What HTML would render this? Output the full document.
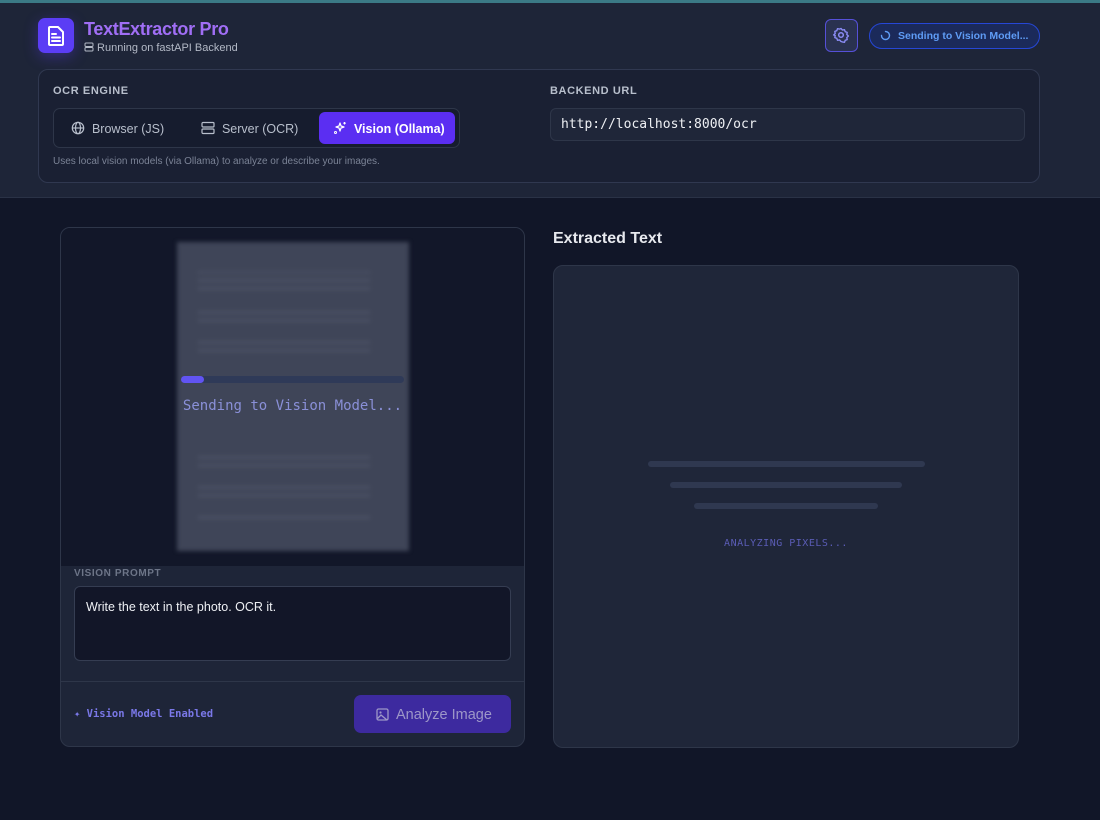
<!DOCTYPE html>
<html><head><meta charset="utf-8"><style>
*{box-sizing:border-box;margin:0;padding:0}
body{width:1100px;height:820px;background:#111628;font-family:"Liberation Sans",sans-serif;position:relative;overflow:hidden;color:#e5e7eb}
.abs{position:absolute}
.mono{font-family:"DejaVu Sans Mono","Liberation Mono",monospace}
</style></head><body>
<div class="abs" style="left:0;top:0;width:1100px;height:198px;background:#1e2538;border-bottom:1px solid #2a3246"></div>
<div class="abs" style="left:0;top:0;width:1100px;height:3px;background:#3b7a86"></div>
<div class="abs" style="left:38px;top:18px;width:36px;height:35px;border-radius:7px;background:#5b3df5;box-shadow:0 4px 14px rgba(91,61,245,.35)">
<svg width="36" height="35" viewBox="0 0 36 35"><path d="M12 9h8l5 5v12a1 1 0 0 1-1 1H12a1 1 0 0 1-1-1V10a1 1 0 0 1 1-1z" fill="none" stroke="#fff" stroke-width="2" stroke-linejoin="round"/><path d="M14 16h4M14 19.5h8M14 23h8" stroke="#fff" stroke-width="2" stroke-linecap="round"/></svg></div>
<div class="abs" style="left:84px;top:19px;font-size:18px;font-weight:bold;color:#a06ef5;letter-spacing:-0.3px">TextExtractor Pro</div>
<div class="abs" style="left:84px;top:42px;font-size:11px;color:#b3b9c6"><svg width="10" height="10" viewBox="0 0 10 10" style="vertical-align:-1px"><rect x="1" y="1" width="8" height="3.5" rx="1" fill="none" stroke="#b3b9c6"/><rect x="1" y="5.5" width="8" height="3.5" rx="1" fill="none" stroke="#b3b9c6"/></svg> Running on fastAPI Backend</div>
<div class="abs" style="left:825px;top:19px;width:33px;height:33px;border:1.5px solid #5650d8;border-radius:6px;background:#2a3250">
<svg width="30" height="30" viewBox="0 0 30 30"><circle cx="15" cy="15" r="2.3" fill="none" stroke="#8b8cf5" stroke-width="1.5"/><path d="M15 8.5l1.4 1.6 2.1-.4.7 2 2 .7-.4 2.1 1.6 1.5-1.6 1.5.4 2.1-2 .7-.7 2-2.1-.4L15 21.5l-1.4-1.6-2.1.4-.7-2-2-.7.4-2.1L7.6 15l1.6-1.5-.4-2.1 2-.7.7-2 2.1.4z" fill="none" stroke="#8b8cf5" stroke-width="1.4" stroke-linejoin="round"/></svg></div>
<div class="abs" style="left:869px;top:23px;width:171px;height:26px;border:1.5px solid #2647d6;border-radius:13px;background:#1b2a5a;font-size:10.5px;font-weight:bold;color:#5f9cf5;padding:6px 0 0 28px">Sending to Vision Model...</div>
<svg class="abs" style="left:880px;top:30px" width="11" height="11" viewBox="0 0 11 11"><path d="M5.5 1.5a4 4 0 1 1-4 4" fill="none" stroke="#5f9cf5" stroke-width="1.4" stroke-linecap="round"/></svg>
<div class="abs" style="left:38px;top:69px;width:1002px;height:114px;border:1px solid #303850;border-radius:10px;background:#1a2033"></div>
<div class="abs" style="left:53px;top:85px;font-size:11px;font-weight:bold;color:#b8bfcc;letter-spacing:.6px">OCR ENGINE</div>
<div class="abs" style="left:53px;top:108px;width:407px;height:40px;border:1px solid #2e3649;border-radius:7px;background:#161c2e"></div>
<div class="abs" style="left:71px;top:121px;font-size:12.5px;color:#b8bfcc"><svg width="14" height="14" viewBox="0 0 14 14" style="vertical-align:-2px"><circle cx="7" cy="7" r="5.7" fill="none" stroke="#b8bfcc" stroke-width="1.2"/><ellipse cx="7" cy="7" rx="2.5" ry="5.7" fill="none" stroke="#b8bfcc" stroke-width="1.2"/><path d="M1.3 7h11.4" stroke="#b8bfcc" stroke-width="1.2"/></svg>&nbsp; Browser (JS)</div>
<div class="abs" style="left:201px;top:121px;font-size:12.5px;color:#b8bfcc"><svg width="14" height="14" viewBox="0 0 14 14" style="vertical-align:-2px"><rect x="1" y="1.5" width="12" height="4.5" rx="1" fill="none" stroke="#b8bfcc" stroke-width="1.2"/><rect x="1" y="8" width="12" height="4.5" rx="1" fill="none" stroke="#b8bfcc" stroke-width="1.2"/></svg>&nbsp; Server (OCR)</div>
<div class="abs" style="left:319px;top:112px;width:136px;height:32px;border-radius:6px;background:#5b2ef2;font-size:12.5px;font-weight:bold;color:#fff;padding:9px 0 0 14px;white-space:nowrap"><svg width="14" height="14" viewBox="0 0 14 14" style="vertical-align:-2px"><path d="M7 2l1 3 3 1-3 1-1 3-1-3-3-1 3-1z" fill="none" stroke="#fff" stroke-width="1.2" stroke-linejoin="round"/><path d="M11.5 1v2.5M10.3 2.2h2.5" stroke="#fff" stroke-width="1.1"/><circle cx="2.5" cy="11.5" r="1" fill="none" stroke="#fff"/></svg>&nbsp; Vision (Ollama)</div>
<div class="abs" style="left:53px;top:156px;font-size:10px;color:#7b8396">Uses local vision models (via Ollama) to analyze or describe your images.</div>
<div class="abs" style="left:550px;top:85px;font-size:11px;font-weight:bold;color:#b8bfcc;letter-spacing:.6px">BACKEND URL</div>
<div class="abs mono" style="left:550px;top:108px;width:475px;height:33px;border:1px solid #2e3649;border-radius:6px;background:#1f2639;font-size:13px;color:#eef0f4;padding:8px 0 0 10px">http://localhost:8000/ocr</div>
<div class="abs" style="left:60px;top:227px;width:465px;height:520px;border:1px solid #2e3649;border-radius:10px;background:#1e2538;overflow:hidden">
 <div style="position:absolute;left:0;top:0;width:465px;height:338px;background:#121729"></div>
 <div style="position:absolute;left:116px;top:14px;width:232px;height:309px;background:#3f4558;filter:blur(2px)">
  <div style="position:absolute;left:22px;top:30px;width:170px;height:1px;box-shadow:0 0 0 1px #4b5164,0 8px 0 1px #4b5164,0 16px 0 1px #4b5164,0 40px 0 1px #4b5164,0 48px 0 1px #4b5164,0 70px 0 1px #4b5164,0 78px 0 1px #4b5164,0 185px 0 1px #4b5164,0 193px 0 1px #4b5164,0 215px 0 1px #4b5164,0 223px 0 1px #4b5164,0 245px 0 1px #4b5164"></div>
 </div>
 <div style="position:absolute;left:120px;top:148px;width:223px;height:7px;border-radius:4px;background:#2f3a58"></div>
 <div style="position:absolute;left:120px;top:148px;width:23px;height:7px;border-radius:4px;background:#6154f2"></div>
 <div class="mono" style="position:absolute;left:0;top:170px;width:463px;text-align:center;font-size:14px;color:#8a90d8">Sending to Vision Model...</div>
 <div style="position:absolute;left:13px;top:340px;font-size:10px;font-weight:bold;color:#6d7588;letter-spacing:.6px">VISION PROMPT</div>
 <div style="position:absolute;left:13px;top:358px;width:437px;height:75px;border:1px solid #353d52;border-radius:6px;background:#121628;font-size:12.5px;color:#eef0f4;padding:13px 0 0 11px">Write the text in the photo. OCR it.</div>
 <div style="position:absolute;left:0;top:453px;width:465px;height:1px;background:#2e3649"></div>
 <div class="mono" style="position:absolute;left:13px;top:480px;font-size:10.5px;font-weight:bold;color:#7a78e8">✦ Vision Model Enabled</div>
 <div style="position:absolute;left:293px;top:467px;width:157px;height:38px;border-radius:7px;background:#3d2a9f;font-size:14.5px;color:#9d97c8;padding:12px 0 0 42px">Analyze Image</div>
 <svg style="position:absolute;left:315px;top:480px" width="13" height="13" viewBox="0 0 13 13"><rect x="1" y="1" width="11" height="11" rx="1.5" fill="none" stroke="#9d97c8" stroke-width="1.3"/><circle cx="4.5" cy="4.5" r="1.1" fill="#9d97c8"/><path d="M1.5 10.5l3.5-3.5 6 5" fill="none" stroke="#9d97c8" stroke-width="1.3"/></svg>
</div>
<div class="abs" style="left:553px;top:230px;font-size:16px;font-weight:bold;color:#e7e9ee">Extracted Text</div>
<div class="abs" style="left:553px;top:265px;width:466px;height:483px;border:1px solid #2e3649;border-radius:10px;background:#1f2639"></div>
<div class="abs" style="left:648px;top:461px;width:277px;height:6px;border-radius:3px;background:#2f3850"></div>
<div class="abs" style="left:670px;top:482px;width:232px;height:6px;border-radius:3px;background:#2f3850"></div>
<div class="abs" style="left:694px;top:503px;width:184px;height:6px;border-radius:3px;background:#2f3850"></div>
<div class="abs mono" style="left:553px;top:538px;width:466px;text-align:center;font-size:10px;color:#5a5cb5;letter-spacing:.5px">ANALYZING PIXELS...</div>
</body></html>
